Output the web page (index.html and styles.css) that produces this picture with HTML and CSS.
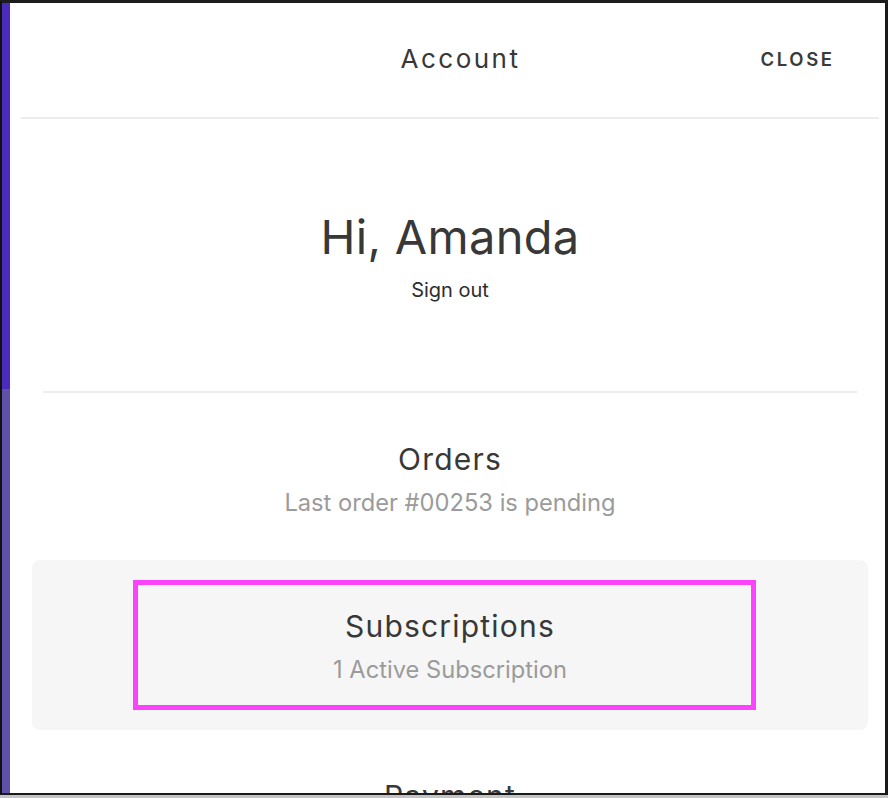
FILE: index.html
```html
<!DOCTYPE html>
<html lang="en">
<head>
<meta charset="utf-8">
<title>Account</title>
<link rel="stylesheet" href="styles.css">
</head>
<body>
<div class="frame">
  <div class="strip">
    <div class="strip-top"></div>
    <div class="strip-bottom"></div>
  </div>
  <div class="panel">
    <header class="header">
      <span class="spacer"></span>
      <h1 class="title">Account</h1>
      <button class="close">CLOSE</button>
    </header>
    <section class="greeting">
      <h2 class="hello">Hi, Amanda</h2>
      <a class="signout">Sign out</a>
    </section>
    <div class="sep"></div>
    <div class="row">
      <div class="row-title">Orders</div>
      <div class="row-sub">Last order #00253 is pending</div>
    </div>
    <div class="row active">
      <div class="row-title">Subscriptions</div>
      <div class="row-sub">1 Active Subscription</div>
      <div class="highlight"></div>
    </div>
    <div class="row">
      <div class="row-title">Payment</div>
      <div class="row-sub">Visa ending in 4242</div>
    </div>
  </div>
</div>
</body>
</html>
```
FILE: styles.css
```css
* { box-sizing: border-box; }
html, body { margin: 0; padding: 0; }
body {
  width: 888px;
  height: 798px;
  background: #c4c4c4;
  overflow: hidden;
  font-family: "Inter", "Liberation Sans", sans-serif;
  color: #353535;
}
.frame {
  width: 888px;
  height: 795px;
  display: flex;
  overflow: hidden;
  border-top: 3px solid #1c1c1c;
  border-left: 2px solid #111;
  border-right: 3px solid #1a1a1a;
  border-bottom: 2px solid #1a1a1a;
  background: #fff;
}
.strip {
  width: 8px;
  flex-shrink: 0;
  display: flex;
  flex-direction: column;
}
.strip-top { height: 386px; background: #4a2bbd; }
.strip-bottom { flex: 1; background: #5f50a8; }
.panel {
  width: 880px;
  flex-shrink: 0;
  background: #fff;
}
.header {
  margin: 0 11px;
  height: 116px;
  border-bottom: 2px solid #ececec;
  display: grid;
  grid-template-columns: 1fr auto 1fr;
  align-items: center;
  padding: 0 47px 0 68px;
}
.title {
  margin: 0;
  font-size: 26px;
  font-weight: 400;
  letter-spacing: 2.5px;
  color: #383838;
  padding-bottom: 3px;
}
.close {
  justify-self: end;
  border: 0;
  background: none;
  padding: 0;
  font-family: inherit;
  font-size: 18.5px;
  font-weight: 600;
  letter-spacing: 2.6px;
  color: #3a3a3a;
  margin-right: -2.6px;
  padding-bottom: 3px;
}
.greeting {
  text-align: center;
  padding-top: 90px;
  height: 272px;
}
.hello {
  margin: 0;
  font-size: 47px;
  font-weight: 400;
  line-height: 56px;
  color: #383838;
  letter-spacing: 0.3px;
}
.signout {
  display: block;
  margin-top: 13px;
  font-size: 20px;
  line-height: 24px;
  color: #2e2e2e;
}
.sep {
  margin: 0 33px;
  height: 2px;
  background: #ececec;
}
.row {
  position: relative;
  margin: 0 22px;
  height: 167px;
  padding-top: 48px;
  text-align: center;
  border-radius: 8px;
}
.row + .row { height: 170px; }
.row.active { background: #f6f6f6; }
.row-title {
  font-size: 30px;
  line-height: 36px;
  letter-spacing: 1.2px;
  color: #383838;
}
.row-sub {
  margin-top: 11px;
  font-size: 23.7px;
  line-height: 30px;
  color: #9b9b9b;
}
.highlight {
  position: absolute;
  left: 101px;
  top: 20px;
  width: 623px;
  height: 130px;
  border: 5px solid #fb43fb;
}
```
